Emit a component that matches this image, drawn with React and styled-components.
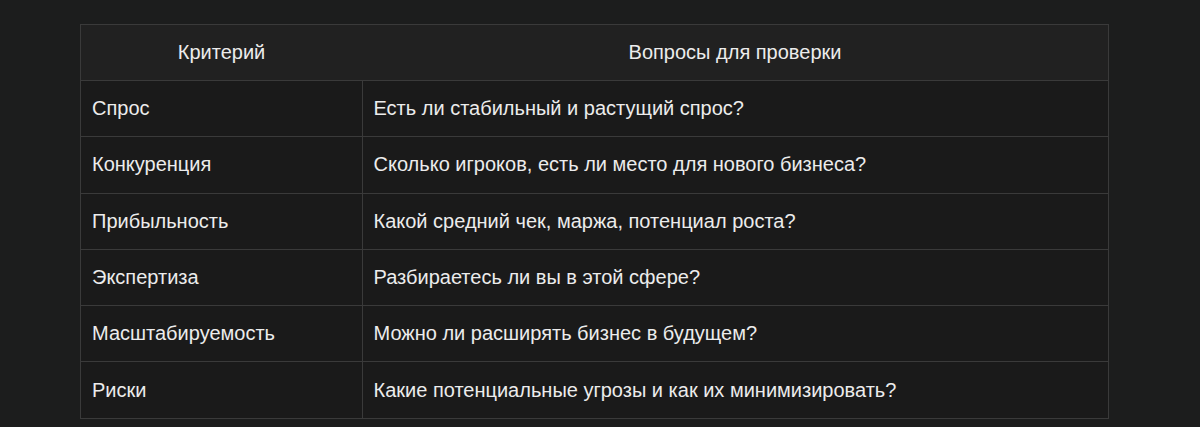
import React from 'react'
import styled, { createGlobalStyle } from 'styled-components'

const GlobalStyle = createGlobalStyle`
  html, body {
    margin: 0;
    padding: 0;
    background: #1c1d1d;
  }
  body {
    font-family: "Liberation Sans", Arial, sans-serif;
  }
`

const Page = styled.div`
  padding: 24px 91px 8px 80px;
  background: #1c1d1d;
  min-height: 427px;
  box-sizing: border-box;
`

const Table = styled.table`
  width: 1029px;
  border-collapse: collapse;
  color: #ececec;
  font-size: 20px;
  table-layout: fixed;
  border: 1px solid #3a3a3a;
`

const HeadRow = styled.tr`
  background: #212121;
  height: 56px;
`

const HeadCell = styled.th`
  font-weight: normal;
  text-align: center;
  padding: 0 11px;
  border-bottom: 1px solid #3a3a3a;
  width: ${(p) => p.$width || 'auto'};
`

const Row = styled.tr`
  background: #1a1a1a;
  height: 56.3px;
`

const Cell = styled.td`
  padding: 0 11px;
  border: 1px solid #3a3a3a;
  vertical-align: middle;
`

const rows = [
  ['Спрос', 'Есть ли стабильный и растущий спрос?'],
  ['Конкуренция', 'Сколько игроков, есть ли место для нового бизнеса?'],
  ['Прибыльность', 'Какой средний чек, маржа, потенциал роста?'],
  ['Экспертиза', 'Разбираетесь ли вы в этой сфере?'],
  ['Масштабируемость', 'Можно ли расширять бизнес в будущем?'],
  ['Риски', 'Какие потенциальные угрозы и как их минимизировать?'],
]

export default function App() {
  return (
    <Page>
      <GlobalStyle />
      <Table>
        <thead>
          <HeadRow>
            <HeadCell $width="259px">Критерий</HeadCell>
            <HeadCell>Вопросы для проверки</HeadCell>
          </HeadRow>
        </thead>
        <tbody>
          {rows.map(([name, question]) => (
            <Row key={name}>
              <Cell>{name}</Cell>
              <Cell>{question}</Cell>
            </Row>
          ))}
        </tbody>
      </Table>
    </Page>
  )
}
